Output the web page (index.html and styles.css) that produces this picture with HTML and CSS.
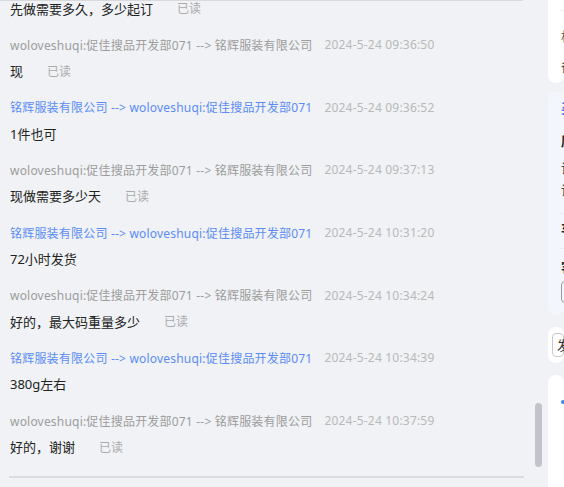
FILE: index.html
```html
<!DOCTYPE html>
<html lang="zh-CN">
<head>
    <meta charset="UTF-8">
    <meta name="viewport" content="width=device-width, initial-scale=1.0">
    <title>聊天记录</title>
    <link rel="stylesheet" href="styles.css">
</head>
<body>
    <div class="page">
        <div class="chat">
            <div class="chat-top"></div>
            <div class="msg-list">
                <!-- first message is scrolled half out of view -->
                <div class="msg first">
                    <div class="msg-text">先做需要多久，多少起订<span class="read">已读</span></div>
                </div>
                <div class="msg">
                    <div class="msg-head"><span class="who">woloveshuqi:促佳搜品开发部071 --&gt; 铭辉服装有限公司</span><span class="time">2024-5-24 09:36:50</span></div>
                    <div class="msg-text">现<span class="read">已读</span></div>
                </div>
                <div class="msg">
                    <div class="msg-head"><span class="who blue">铭辉服装有限公司 --&gt; woloveshuqi:促佳搜品开发部071</span><span class="time">2024-5-24 09:36:52</span></div>
                    <div class="msg-text">1件也可</div>
                </div>
                <div class="msg">
                    <div class="msg-head"><span class="who">woloveshuqi:促佳搜品开发部071 --&gt; 铭辉服装有限公司</span><span class="time">2024-5-24 09:37:13</span></div>
                    <div class="msg-text">现做需要多少天<span class="read">已读</span></div>
                </div>
                <div class="msg">
                    <div class="msg-head"><span class="who blue">铭辉服装有限公司 --&gt; woloveshuqi:促佳搜品开发部071</span><span class="time">2024-5-24 10:31:20</span></div>
                    <div class="msg-text">72小时发货</div>
                </div>
                <div class="msg">
                    <div class="msg-head"><span class="who">woloveshuqi:促佳搜品开发部071 --&gt; 铭辉服装有限公司</span><span class="time">2024-5-24 10:34:24</span></div>
                    <div class="msg-text">好的，最大码重量多少<span class="read">已读</span></div>
                </div>
                <div class="msg">
                    <div class="msg-head"><span class="who blue">铭辉服装有限公司 --&gt; woloveshuqi:促佳搜品开发部071</span><span class="time">2024-5-24 10:34:39</span></div>
                    <div class="msg-text">380g左右</div>
                </div>
                <div class="msg">
                    <div class="msg-head"><span class="who">woloveshuqi:促佳搜品开发部071 --&gt; 铭辉服装有限公司</span><span class="time">2024-5-24 10:37:59</span></div>
                    <div class="msg-text">好的，谢谢<span class="read">已读</span></div>
                </div>
            </div>
            <div class="chat-bottom"></div>
            <div class="scroll-thumb"></div>
        </div>

        <div class="side">
            <div class="card card-info">
                <div class="card-line"></div>
                <div class="side-row">格式</div>
                <div class="side-row">备注</div>
            </div>
            <div class="card card-buyer">
                <div class="side-row title">买家信息</div>
                <div class="side-row strong origin">原始需求</div>
                <div class="side-row ask">询价数量</div>
                <div class="side-row">询价时间</div>
                <div class="card-line line-a"></div>
                <div class="side-row strong">车间</div>
                <div class="card-line line-b"></div>
                <div class="side-row strong">客户标签</div>
                <div class="tag">新客</div>
            </div>
            <div class="card card-input">
                <div class="input-box">发送</div>
            </div>
            <div class="card card-tools">
                <span class="tool-dot"></span>
            </div>
        </div>
    </div>
</body>
</html>
```

FILE: styles.css
```css
/* Chat history page */
body {
    margin: 0;
    background-color: #f0f2f5;
    font-family: "Noto Sans", "Noto Sans CJK SC", sans-serif;
    overflow: hidden;
}

.page {
    display: flex;
    height: 487px;
}

.chat {
    width: 548px;
    flex-shrink: 0;
    position: relative;
    display: flex;
    flex-direction: column;
}

.chat-top {
    width: 523px;
    height: 1px;
    background-color: #d8d9dc;
}

.msg-list {
    flex: 1;
    overflow: hidden;
    padding-left: 10px;
}

.msg.first {
    margin-top: -3px;
}

.msg-head {
    display: flex;
    align-items: center;
    height: 20px;
    margin-top: 16.67px;
    font-size: 12px;
    letter-spacing: 0.2px;
    color: #9c9c9c;
    white-space: nowrap;
}

.msg-head .blue {
    color: #5b8cf6;
}

.msg-head .time {
    margin-left: 12px;
    color: #b9b9b9;
}

.msg-text {
    display: flex;
    align-items: center;
    height: 20px;
    margin-top: 6px;
    font-size: 13px;
    color: #222;
    white-space: nowrap;
}

.msg.first .msg-text {
    margin-top: 0;
}

.read {
    margin-left: 24px;
    font-size: 12px;
    color: #ababab;
}

.chat-bottom {
    height: 2px;
    margin: 0 24px 9px 9px;
    background-color: #dcdcde;
}

.scroll-thumb {
    position: absolute;
    left: 535px;
    top: 403px;
    width: 7px;
    height: 64px;
    border-radius: 4px;
    background-color: #c1c4ca;
}

/* Right side cards */
.side {
    flex: 1;
    display: flex;
    flex-direction: column;
    overflow: hidden;
}

.card {
    flex-shrink: 0;
    background-color: #fff;
    border-radius: 8px;
    padding-left: 13px;
    font-size: 13px;
    color: #555;
    white-space: nowrap;
    overflow: hidden;
    box-sizing: border-box;
}

.card-line {
    height: 1px;
    background-color: #ececf0;
}

.side-row {
    line-height: 30px;
}

.card-info {
    margin-top: -10px;
    height: 93px;
    padding-top: 20px;
}

.card-info .card-line {
    margin-bottom: 10px;
}

.card-buyer {
    margin-top: 9px;
    height: 223px;
    padding-top: 5px;
    background-color: #f4f6fd;
    color: #444;
}

.card-buyer .side-row {
    line-height: 22px;
}

.card-buyer .title {
    color: #4d6ff0;
    font-weight: bold;
}

.card-buyer .strong {
    color: #222;
    font-weight: bold;
}

.card-buyer .origin {
    margin-top: 11px;
}

.card-buyer .ask {
    margin-top: 5px;
}

.card-buyer .line-a {
    margin: 12px 0 3px;
}

.card-buyer .line-b {
    margin: 9px 0 7px;
}

.tag {
    display: inline-block;
    margin-top: 3px;
    padding: 1px 4px;
    border: 1px solid #999;
    border-radius: 4px;
    font-size: 12px;
    line-height: 18px;
}

.card-input {
    margin-top: 12px;
    height: 36px;
    padding: 6px 0 0 4px;
}

.input-box {
    height: 24px;
    line-height: 22px;
    padding-left: 4px;
    border: 1px solid #c9c9c9;
    border-radius: 4px;
    box-sizing: border-box;
    color: #333;
}

.card-tools {
    margin-top: 12px;
    height: 150px;
    padding-top: 25px;
}

.tool-dot {
    display: block;
    width: 6px;
    height: 4px;
    border-radius: 2px;
    background-color: #3f8cf5;
}
```
